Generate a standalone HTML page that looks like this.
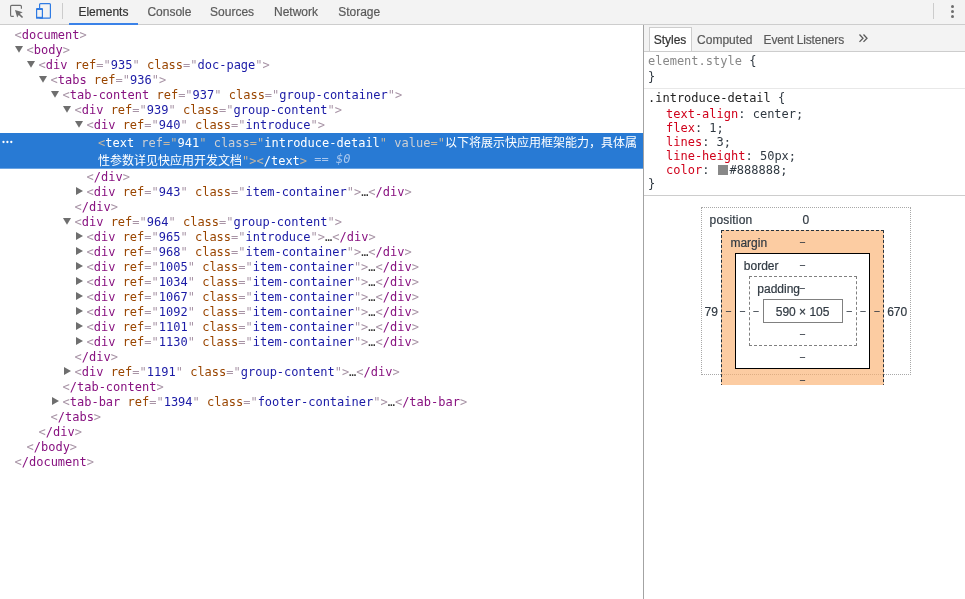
<!DOCTYPE html>
<html lang="en">
<head>
<meta charset="utf-8">
<title>DevTools</title>
<style>
html,body{margin:0;padding:0;}
body{width:965px;height:599px;position:relative;overflow:hidden;background:#fff;
  font-family:"Liberation Sans","Noto Sans CJK SC",sans-serif;font-size:12px;color:#333;}
.abs{position:absolute;}
#toolbar,#tree,#side{will-change:transform;}
#toolbar{left:0;top:0;width:965px;height:24px;background:#f3f3f3;border-bottom:1px solid #cdcdcd;}
.tab,.stab,.bm{-webkit-text-stroke:0.2px currentColor;}
.tab{position:absolute;top:0;height:24px;line-height:24px;width:100px;text-align:center;font-size:12px;color:#5a5a5a;white-space:nowrap;}
.tab.sel{color:#333;}
#tree{left:0;top:28px;width:643px;height:571px;font-family:"DejaVu Sans Mono","Noto Sans CJK SC",monospace;font-size:12px;}
.ln{position:absolute;left:0;height:15px;line-height:15px;white-space:pre;}
.t{color:#881280;}
.b{color:#a894a6;}
.n{color:#994500;}
.v{color:#1a1aa6;}
.arrow{position:absolute;}
.ar{width:7px;height:8px;background:#6e6e6e;clip-path:polygon(0 0,100% 50%,0 100%);}
.ad{width:8px;height:7px;background:#6e6e6e;clip-path:polygon(0 0,100% 0,50% 96%);}
#selrow{left:0;top:105px;width:643px;height:35px;background:#287ad4;border-bottom:1px solid #6ba4e2;}
#selrow .ln{height:18px;line-height:18px;color:#fff;}
#selrow .b{color:#c2b6a4;}
#selrow .n{color:#cdd0d4;}
#selrow .e{color:#a9c7ee;position:relative;top:-2px;}
#selrow .t,#selrow .v{color:#fff;}
#divider{left:643px;top:25px;width:1px;height:574px;background:#a3a3a3;}
#side{left:644px;top:25px;width:321px;height:574px;}
#sidetabs{left:0;top:0;width:321px;height:26px;background:#f3f3f3;border-bottom:1px solid #cdcdcd;}
.stab{position:absolute;top:2px;height:26px;line-height:26px;width:100px;text-align:center;font-size:12px;color:#5a5a5a;white-space:nowrap;}
.mono{font-family:"DejaVu Sans Mono","Noto Sans CJK SC",monospace;font-size:12px;white-space:pre;color:#303942;}
.sl{position:absolute;left:4px;height:14px;line-height:14px;}
.p{color:#d0021b;}
.s{color:#222;}
.g{color:#888;}
.bm{font-size:12px;color:#303942;position:absolute;white-space:nowrap;line-height:14px;height:14px;}
.dz{font-size:9px;}
</style>
</head>
<body>
<div id="toolbar" class="abs">
  <svg class="abs" style="left:6px;top:0" width="24" height="24" viewBox="6 0 24 24"><path d="M21.4 8.8V6.5a1.1 1.1 0 0 0-1.1-1.1H11.7a1.1 1.1 0 0 0-1.1 1.1V15.2a1.1 1.1 0 0 0 1.1 1.1H13.8" fill="none" stroke="#6e6e6e" stroke-width="1.15"/><path d="M15 10L22.7 12.3L19.8 13.8L23.1 16.9L22 18L18.7 14.9L17.2 17.6z" fill="#6e6e6e"/></svg>
  <svg class="abs" style="left:30px;top:0" width="24" height="24" viewBox="0 0 24 24"><rect x="9.6" y="3.6" width="10.8" height="14.6" rx="0.9" fill="none" stroke="#2f7be3" stroke-width="1.2"/><rect x="6" y="8" width="7" height="10.8" rx="0.9" fill="#2f7be3"/><rect x="7.2" y="10" width="4.6" height="6.8" fill="#f3f3f3"/></svg>
  <div class="abs" style="left:62px;top:3px;width:1px;height:16px;background:#ccc"></div>
  <div class="tab sel" style="left:53.4px">Elements</div>
  <div class="abs" style="left:69px;top:23px;width:69px;height:2px;background:#3b82e8"></div>
  <div class="tab" style="left:119.4px">Console</div>
  <div class="tab" style="left:182.1px">Sources</div>
  <div class="tab" style="left:246px">Network</div>
  <div class="tab" style="left:309.2px">Storage</div>
  <div class="abs" style="left:933px;top:3px;width:1px;height:16px;background:#ccc"></div>
  <svg class="abs" style="left:947px;top:0" width="12" height="24" viewBox="0 0 12 24"><circle cx="5.5" cy="6.5" r="1.5" fill="#6e6e6e"/><circle cx="5.5" cy="11.5" r="1.5" fill="#6e6e6e"/><circle cx="5.5" cy="16.5" r="1.5" fill="#6e6e6e"/></svg>
</div>

<div id="tree" class="abs">
  <div class="ln" style="top:0;left:14.5px"><span class="t"><span class="b">&lt;</span>document<span class="b">&gt;</span></span></div>
  <div class="ln" style="top:15px;left:26.5px"><span class="t"><span class="b">&lt;</span>body<span class="b">&gt;</span></span></div>
  <div class="ln" style="top:30px;left:38.5px"><span class="t"><span class="b">&lt;</span>div <span class="n">ref</span><span class="b">="</span><span class="v">935</span><span class="b">"</span> <span class="n">class</span><span class="b">="</span><span class="v">doc-page</span><span class="b">"&gt;</span></span></div>
  <div class="ln" style="top:45px;left:50.5px"><span class="t"><span class="b">&lt;</span>tabs <span class="n">ref</span><span class="b">="</span><span class="v">936</span><span class="b">"&gt;</span></span></div>
  <div class="ln" style="top:60px;left:62.5px"><span class="t"><span class="b">&lt;</span>tab-content <span class="n">ref</span><span class="b">="</span><span class="v">937</span><span class="b">"</span> <span class="n">class</span><span class="b">="</span><span class="v">group-container</span><span class="b">"&gt;</span></span></div>
  <div class="ln" style="top:75px;left:74.5px"><span class="t"><span class="b">&lt;</span>div <span class="n">ref</span><span class="b">="</span><span class="v">939</span><span class="b">"</span> <span class="n">class</span><span class="b">="</span><span class="v">group-content</span><span class="b">"&gt;</span></span></div>
  <div class="ln" style="top:90px;left:86.5px"><span class="t"><span class="b">&lt;</span>div <span class="n">ref</span><span class="b">="</span><span class="v">940</span><span class="b">"</span> <span class="n">class</span><span class="b">="</span><span class="v">introduce</span><span class="b">"&gt;</span></span></div>
  <div id="selrow" class="abs">
    <svg class="abs" style="left:0;top:5px" width="16" height="8" viewBox="0 0 16 8"><circle cx="3.5" cy="4" r="1.15" fill="#fff"/><circle cx="7.4" cy="4" r="1.15" fill="#fff"/><circle cx="11.3" cy="4" r="1.15" fill="#fff"/></svg>
    <div class="ln" style="top:1px;left:98px"><span class="t"><span class="b">&lt;</span>text <span class="n">ref</span><span class="b">="</span><span class="v">941</span><span class="b">"</span> <span class="n">class</span><span class="b">="</span><span class="v">introduce-detail</span><span class="b">"</span> <span class="n">value</span><span class="b">="</span><span class="v">以下将展示快应用框架能力，具体属</span></span></div>
    <div class="ln" style="top:19px;left:98px"><span class="t"><span class="v">性参数详见快应用开发文档</span><span class="b">"&gt;&lt;</span>/text<span class="b">&gt;</span></span><span class="e"> == <i>$0</i></span></div>
  </div>
  <div class="ln" style="top:142px;left:86.5px"><span class="t"><span class="b">&lt;</span>/div<span class="b">&gt;</span></span></div>
  <div class="ln" style="top:157px;left:86.5px"><span class="t"><span class="b">&lt;</span>div <span class="n">ref</span><span class="b">="</span><span class="v">943</span><span class="b">"</span> <span class="n">class</span><span class="b">="</span><span class="v">item-container</span><span class="b">"&gt;</span></span>…<span class="t"><span class="b">&lt;</span>/div<span class="b">&gt;</span></span></div>
  <div class="ln" style="top:172px;left:74.5px"><span class="t"><span class="b">&lt;</span>/div<span class="b">&gt;</span></span></div>
  <div class="ln" style="top:187px;left:74.5px"><span class="t"><span class="b">&lt;</span>div <span class="n">ref</span><span class="b">="</span><span class="v">964</span><span class="b">"</span> <span class="n">class</span><span class="b">="</span><span class="v">group-content</span><span class="b">"&gt;</span></span></div>
  <div class="ln" style="top:202px;left:86.5px"><span class="t"><span class="b">&lt;</span>div <span class="n">ref</span><span class="b">="</span><span class="v">965</span><span class="b">"</span> <span class="n">class</span><span class="b">="</span><span class="v">introduce</span><span class="b">"&gt;</span></span>…<span class="t"><span class="b">&lt;</span>/div<span class="b">&gt;</span></span></div>
  <div class="ln" style="top:217px;left:86.5px"><span class="t"><span class="b">&lt;</span>div <span class="n">ref</span><span class="b">="</span><span class="v">968</span><span class="b">"</span> <span class="n">class</span><span class="b">="</span><span class="v">item-container</span><span class="b">"&gt;</span></span>…<span class="t"><span class="b">&lt;</span>/div<span class="b">&gt;</span></span></div>
  <div class="ln" style="top:232px;left:86.5px"><span class="t"><span class="b">&lt;</span>div <span class="n">ref</span><span class="b">="</span><span class="v">1005</span><span class="b">"</span> <span class="n">class</span><span class="b">="</span><span class="v">item-container</span><span class="b">"&gt;</span></span>…<span class="t"><span class="b">&lt;</span>/div<span class="b">&gt;</span></span></div>
  <div class="ln" style="top:247px;left:86.5px"><span class="t"><span class="b">&lt;</span>div <span class="n">ref</span><span class="b">="</span><span class="v">1034</span><span class="b">"</span> <span class="n">class</span><span class="b">="</span><span class="v">item-container</span><span class="b">"&gt;</span></span>…<span class="t"><span class="b">&lt;</span>/div<span class="b">&gt;</span></span></div>
  <div class="ln" style="top:262px;left:86.5px"><span class="t"><span class="b">&lt;</span>div <span class="n">ref</span><span class="b">="</span><span class="v">1067</span><span class="b">"</span> <span class="n">class</span><span class="b">="</span><span class="v">item-container</span><span class="b">"&gt;</span></span>…<span class="t"><span class="b">&lt;</span>/div<span class="b">&gt;</span></span></div>
  <div class="ln" style="top:277px;left:86.5px"><span class="t"><span class="b">&lt;</span>div <span class="n">ref</span><span class="b">="</span><span class="v">1092</span><span class="b">"</span> <span class="n">class</span><span class="b">="</span><span class="v">item-container</span><span class="b">"&gt;</span></span>…<span class="t"><span class="b">&lt;</span>/div<span class="b">&gt;</span></span></div>
  <div class="ln" style="top:292px;left:86.5px"><span class="t"><span class="b">&lt;</span>div <span class="n">ref</span><span class="b">="</span><span class="v">1101</span><span class="b">"</span> <span class="n">class</span><span class="b">="</span><span class="v">item-container</span><span class="b">"&gt;</span></span>…<span class="t"><span class="b">&lt;</span>/div<span class="b">&gt;</span></span></div>
  <div class="ln" style="top:307px;left:86.5px"><span class="t"><span class="b">&lt;</span>div <span class="n">ref</span><span class="b">="</span><span class="v">1130</span><span class="b">"</span> <span class="n">class</span><span class="b">="</span><span class="v">item-container</span><span class="b">"&gt;</span></span>…<span class="t"><span class="b">&lt;</span>/div<span class="b">&gt;</span></span></div>
  <div class="ln" style="top:322px;left:74.5px"><span class="t"><span class="b">&lt;</span>/div<span class="b">&gt;</span></span></div>
  <div class="ln" style="top:337px;left:74.5px"><span class="t"><span class="b">&lt;</span>div <span class="n">ref</span><span class="b">="</span><span class="v">1191</span><span class="b">"</span> <span class="n">class</span><span class="b">="</span><span class="v">group-content</span><span class="b">"&gt;</span></span>…<span class="t"><span class="b">&lt;</span>/div<span class="b">&gt;</span></span></div>
  <div class="ln" style="top:352px;left:62.5px"><span class="t"><span class="b">&lt;</span>/tab-content<span class="b">&gt;</span></span></div>
  <div class="ln" style="top:367px;left:62.5px"><span class="t"><span class="b">&lt;</span>tab-bar <span class="n">ref</span><span class="b">="</span><span class="v">1394</span><span class="b">"</span> <span class="n">class</span><span class="b">="</span><span class="v">footer-container</span><span class="b">"&gt;</span></span>…<span class="t"><span class="b">&lt;</span>/tab-bar<span class="b">&gt;</span></span></div>
  <div class="ln" style="top:382px;left:50.5px"><span class="t"><span class="b">&lt;</span>/tabs<span class="b">&gt;</span></span></div>
  <div class="ln" style="top:397px;left:38.5px"><span class="t"><span class="b">&lt;</span>/div<span class="b">&gt;</span></span></div>
  <div class="ln" style="top:412px;left:26.5px"><span class="t"><span class="b">&lt;</span>/body<span class="b">&gt;</span></span></div>
  <div class="ln" style="top:427px;left:14.5px"><span class="t"><span class="b">&lt;</span>/document<span class="b">&gt;</span></span></div>

  <!-- arrows -->
  <div class="arrow ad" style="left:15px;top:18px"></div>
  <div class="arrow ad" style="left:27px;top:33px"></div>
  <div class="arrow ad" style="left:39px;top:48px"></div>
  <div class="arrow ad" style="left:51px;top:63px"></div>
  <div class="arrow ad" style="left:63px;top:78px"></div>
  <div class="arrow ad" style="left:75px;top:93px"></div>
  <div class="arrow ar" style="left:76px;top:159px"></div>
  <div class="arrow ad" style="left:63px;top:190px"></div>
  <div class="arrow ar" style="left:76px;top:204px"></div>
  <div class="arrow ar" style="left:76px;top:219px"></div>
  <div class="arrow ar" style="left:76px;top:234px"></div>
  <div class="arrow ar" style="left:76px;top:249px"></div>
  <div class="arrow ar" style="left:76px;top:264px"></div>
  <div class="arrow ar" style="left:76px;top:279px"></div>
  <div class="arrow ar" style="left:76px;top:294px"></div>
  <div class="arrow ar" style="left:76px;top:309px"></div>
  <div class="arrow ar" style="left:64px;top:339px"></div>
  <div class="arrow ar" style="left:52px;top:369px"></div>
</div>

<div id="divider" class="abs"></div>

<div id="side" class="abs">
  <div id="sidetabs" class="abs">
    <div class="abs" style="left:5px;top:2px;width:41px;height:23px;background:#fff;border:1px solid #cdcdcd;border-bottom:none"></div>
    <div class="stab" style="left:-24px;color:#333">Styles</div>
    <div class="stab" style="left:30.8px">Computed</div>
    <div class="stab" style="left:109.8px;letter-spacing:-0.15px">Event Listeners</div>
    <svg class="abs" style="left:214px;top:8px" width="11" height="10" viewBox="0 0 11 10"><path d="M1.5 1.5L5 5.2L1.5 8.9M5.5 1.5L9 5.2L5.5 8.9" fill="none" stroke="#5a5a5a" stroke-width="1.3"/></svg>
  </div>
  <div class="abs mono" style="left:0;top:27px;width:321px;height:170px">
    <div class="sl" style="top:2px"><span class="g">element.style</span> {</div>
    <div class="sl" style="top:18px">}</div>
    <div class="abs" style="left:0;top:36px;width:321px;height:1px;background:#e8e8e8"></div>
    <div class="sl" style="top:39px"><span class="s">.introduce-detail</span> {</div>
    <div class="sl" style="top:55px;left:22px"><span class="p">text-align</span>: center;</div>
    <div class="sl" style="top:69px;left:22px"><span class="p">flex</span>: 1;</div>
    <div class="sl" style="top:83px;left:22px"><span class="p">lines</span>: 3;</div>
    <div class="sl" style="top:97px;left:22px"><span class="p">line-height</span>: 50px;</div>
    <div class="sl" style="top:111px;left:22px"><span class="p">color</span>: <span style="display:inline-block;width:10px;height:10px;background:#888;vertical-align:-1px;margin:0 2px 0 1px"></span>#888888;</div>
    <div class="sl" style="top:125px">}</div>
    <div class="abs" style="left:0;top:143px;width:321px;height:1px;background:#cdcdcd"></div>
  </div>

  <!-- box model -->
  <div class="abs" style="left:0;top:182px;width:321px;height:178px;overflow:hidden">
    <div class="abs" style="left:57px;top:0;width:208px;height:166px;border:1px dotted #a8a8a8"></div>
    <div class="abs" style="left:77px;top:23px;width:161px;height:170px;background:rgba(250,178,114,.66);border:1px dashed #26323d"></div>
    <div class="abs" style="left:91px;top:46px;width:133px;height:114px;background:#fff;border:1px solid #000"></div>
    <div class="abs" style="left:105px;top:69px;width:106px;height:68px;border:1px dashed #808080"></div>
    <div class="abs" style="left:119px;top:92px;width:78px;height:22px;border:1px solid #808080"></div>
  </div>
  <div class="bm" style="left:65.6px;top:188px;letter-spacing:0.18px">position</div>
  <div class="bm" style="left:131.8px;top:188px;width:60px;text-align:center">0</div>
  <div class="bm" style="left:86.4px;top:211px">margin</div>
  <div class="bm" style="left:99.8px;top:234px">border</div>
  <div class="bm" style="left:113.3px;top:257px">padding</div>
  <div class="bm" style="left:118.6px;top:280px;width:80px;text-align:center">590 × 105</div>
  <div class="bm" style="left:52.2px;top:280px;width:30px;text-align:center">79</div>
  <div class="bm" style="left:238.2px;top:280px;width:30px;text-align:center">670</div>
  <div class="bm dz" style="left:148.5px;top:210px;width:20px;text-align:center">–</div>
  <div class="bm dz" style="left:148.5px;top:233px;width:20px;text-align:center">–</div>
  <div class="bm dz" style="left:148.3px;top:256px;width:20px;text-align:center">–</div>
  <div class="bm dz" style="left:148.5px;top:302px;width:20px;text-align:center">–</div>
  <div class="bm dz" style="left:148.5px;top:325px;width:20px;text-align:center">–</div>
  <div class="bm dz" style="left:148.5px;top:348px;width:20px;text-align:center">–</div>
  <div class="bm dz" style="left:74.5px;top:279px;width:20px;text-align:center">–</div>
  <div class="bm dz" style="left:88.5px;top:279px;width:20px;text-align:center">–</div>
  <div class="bm dz" style="left:102.0px;top:279px;width:20px;text-align:center">–</div>
  <div class="bm dz" style="left:195.2px;top:279px;width:20px;text-align:center">–</div>
  <div class="bm dz" style="left:208.9px;top:279px;width:20px;text-align:center">–</div>
  <div class="bm dz" style="left:222.9px;top:279px;width:20px;text-align:center">–</div>
</div>
</body>
</html>
